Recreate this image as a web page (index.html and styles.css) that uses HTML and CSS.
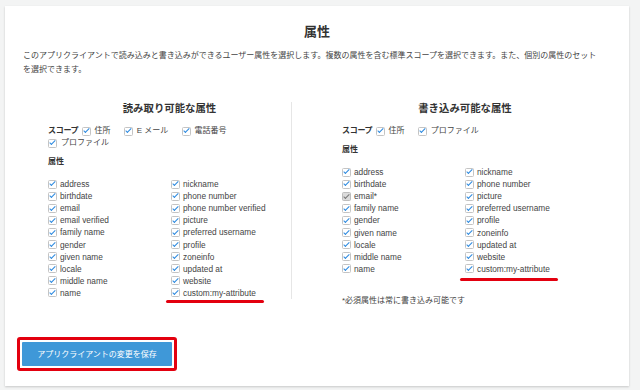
FILE: index.html
```html
<!DOCTYPE html>
<html lang="ja">
<head>
  <meta charset="UTF-8">
  <meta name="viewport" content="width=device-width, initial-scale=1.0">
  <title>属性</title>
  <link rel="stylesheet" href="styles.css">
</head>
<body>
  <div class="card">
    <h1 class="title">属性</h1>
    <p class="desc">このアプリクライアントで読み込みと書き込みができるユーザー属性を選択します。複数の属性を含む標準スコープを選択できます。また、個別の属性のセットを選択できます。</p>

    <div class="columns">
      <!-- read -->
      <div class="col col-read">
        <h2>読み取り可能な属性</h2>
        <div class="scope">
          <span class="scope-label">スコープ</span>
          <span class="opt"><span class="cb"></span>住所</span>
          <span class="opt"><span class="cb"></span>E メール</span>
          <span class="opt"><span class="cb"></span>電話番号</span>
          <span class="opt"><span class="cb"></span>プロファイル</span>
        </div>
        <div class="attr-label">属性</div>
        <div class="attrs">
          <div class="attr-col">
            <div class="attr"><span class="cb"></span>address</div>
            <div class="attr"><span class="cb"></span>birthdate</div>
            <div class="attr"><span class="cb"></span>email</div>
            <div class="attr"><span class="cb"></span>email verified</div>
            <div class="attr"><span class="cb"></span>family name</div>
            <div class="attr"><span class="cb"></span>gender</div>
            <div class="attr"><span class="cb"></span>given name</div>
            <div class="attr"><span class="cb"></span>locale</div>
            <div class="attr"><span class="cb"></span>middle name</div>
            <div class="attr"><span class="cb"></span>name</div>
          </div>
          <div class="attr-col">
            <div class="attr"><span class="cb"></span>nickname</div>
            <div class="attr"><span class="cb"></span>phone number</div>
            <div class="attr"><span class="cb"></span>phone number verified</div>
            <div class="attr"><span class="cb"></span>picture</div>
            <div class="attr"><span class="cb"></span>preferred username</div>
            <div class="attr"><span class="cb"></span>profile</div>
            <div class="attr"><span class="cb"></span>zoneinfo</div>
            <div class="attr"><span class="cb"></span>updated at</div>
            <div class="attr"><span class="cb"></span>website</div>
            <div class="attr marked"><span class="cb"></span>custom:my-attribute</div>
          </div>
        </div>
      </div>

      <!-- write -->
      <div class="col col-write">
        <h2>書き込み可能な属性</h2>
        <div class="scope">
          <span class="scope-label">スコープ</span>
          <span class="opt"><span class="cb"></span>住所</span>
          <span class="opt"><span class="cb"></span>プロファイル</span>
        </div>
        <div class="attr-label">属性</div>
        <div class="attrs">
          <div class="attr-col">
            <div class="attr"><span class="cb"></span>address</div>
            <div class="attr"><span class="cb"></span>birthdate</div>
            <div class="attr"><span class="cb disabled"></span>email*</div>
            <div class="attr"><span class="cb"></span>family name</div>
            <div class="attr"><span class="cb"></span>gender</div>
            <div class="attr"><span class="cb"></span>given name</div>
            <div class="attr"><span class="cb"></span>locale</div>
            <div class="attr"><span class="cb"></span>middle name</div>
            <div class="attr"><span class="cb"></span>name</div>
          </div>
          <div class="attr-col">
            <div class="attr"><span class="cb"></span>nickname</div>
            <div class="attr"><span class="cb"></span>phone number</div>
            <div class="attr"><span class="cb"></span>picture</div>
            <div class="attr"><span class="cb"></span>preferred username</div>
            <div class="attr"><span class="cb"></span>profile</div>
            <div class="attr"><span class="cb"></span>zoneinfo</div>
            <div class="attr"><span class="cb"></span>updated at</div>
            <div class="attr"><span class="cb"></span>website</div>
            <div class="attr marked marked-low"><span class="cb"></span>custom:my-attribute</div>
          </div>
        </div>
        <p class="note">*必須属性は常に書き込み可能です</p>
      </div>
    </div>

    <div class="save-wrap">
      <button class="save">アプリクライアントの変更を保存</button>
    </div>
  </div>
</body>
</html>
```

FILE: styles.css
```css
html, body {
  margin: 0;
  height: 100%;
}

body {
  font-family: "Liberation Sans", "Noto Sans CJK JP", sans-serif;
  background-color: #f3f4f4;
  color: #444;
  padding: 6px 0 0 5px;
  box-sizing: border-box;
}

.card {
  width: 624px;
  background-color: #fff;
  box-shadow: 0 1px 2px rgba(0, 0, 0, 0.18);
  padding: 18px 0 15px 0;
  box-sizing: border-box;
}

.title {
  margin: 0;
  text-align: center;
  font-size: 13px;
  line-height: 16px;
  font-weight: bold;
  color: #333;
}

.desc {
  margin: 9px 0 0 18px;
  width: 580px;
  font-size: 8px;
  line-height: 14px;
  color: #444;
}

.columns {
  display: grid;
  grid-template-columns: 244px 246px;
  column-gap: 50px;
  align-items: start;
  margin: 25px 0 0 43px;
}

.col h2 {
  margin: 0;
  text-align: center;
  font-size: 10.4px;
  line-height: 14px;
  font-weight: bold;
  color: #333;
}

.col-read {
  border-right: 1px solid #e6e6e6;
}

.scope {
  margin-top: 9px;
  font-size: 8px;
  line-height: 12px;
  padding-right: 10px;
}

.scope-label {
  font-weight: bold;
  color: #333;
  margin-right: 1px;
  letter-spacing: -0.3px;
}

.opt {
  display: inline-flex;
  align-items: center;
  margin-right: 11px;
  vertical-align: top;
  height: 12px;
}

.opt .cb {
  margin-right: 4px;
}

.attr-label {
  margin-top: 7px;
  font-size: 8px;
  line-height: 12px;
  font-weight: bold;
  color: #333;
}

.attrs {
  display: grid;
  grid-template-columns: 123px 1fr;
  margin-top: 10px;
}

.attr {
  display: flex;
  align-items: center;
  height: 12.1px;
  font-size: 8.3px;
  color: #444;
  white-space: nowrap;
}

.attr .cb {
  margin-right: 3px;
}

/* red annotation under the custom attribute */
.marked {
  position: relative;
}

.marked::after {
  content: "";
  position: absolute;
  left: -5px;
  top: calc(100% + 1px);
  width: 98px;
  height: 3px;
  border-radius: 2px;
  background-color: #e3000f;
}

.marked-low::after {
  top: calc(100% + 3px);
}

.cb {
  position: relative;
  display: inline-block;
  flex: none;
  width: 9px;
  height: 9px;
  box-sizing: border-box;
  border: 1px solid #c4c4c4;
  border-radius: 1.5px;
  background-color: #fff;
}

.cb::after {
  content: "";
  position: absolute;
  left: 2.1px;
  top: -0.2px;
  width: 2.4px;
  height: 4.8px;
  border: solid #2f8be0;
  border-width: 0 1.8px 1.8px 0;
  transform: rotate(45deg);
}

.cb.disabled {
  background-color: #dcdcdc;
  border-color: #bdbdbd;
}

.cb.disabled::after {
  border-color: #7a7a7a;
}

.note {
  margin: 20px 0 0 0;
  font-size: 8px;
  line-height: 12px;
  color: #444;
}

.save-wrap {
  display: inline-block;
  margin: 30px 0 0 12px;
  padding: 2px;
  border: 3px solid #e3000f;
  border-radius: 3px;
  background-color: #fff;
}

.save {
  display: block;
  width: 150px;
  height: 24px;
  border: none;
  border-radius: 1px;
  background-color: #3f98d8;
  color: #fff;
  font-family: "Liberation Sans", "Noto Sans CJK JP", sans-serif;
  font-size: 8px;
  padding: 0;
  cursor: pointer;
}
```
